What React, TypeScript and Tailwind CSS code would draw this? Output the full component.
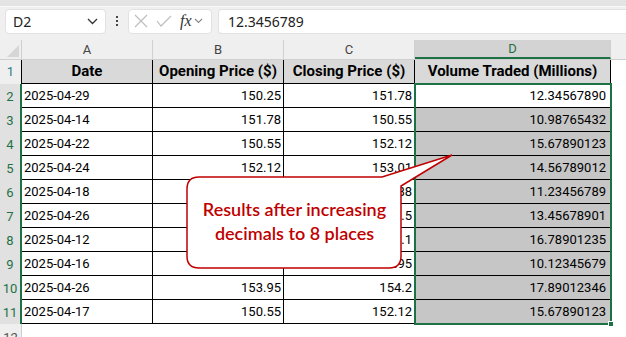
import React from 'react';

const rows = [
    ['2025-04-29', '150.25', '151.78', '12.34567890'],
    ['2025-04-14', '151.78', '150.55', '10.98765432'],
    ['2025-04-22', '150.55', '152.12', '15.67890123'],
    ['2025-04-24', '152.12', '153.01', '14.56789012'],
    ['2025-04-18', '153.01', '152.88', '11.23456789'],
    ['2025-04-26', '152.88', '151.5', '13.45678901'],
    ['2025-04-12', '151.5', '154.1', '16.78901235'],
    ['2025-04-16', '154.1', '153.95', '10.12345679'],
    ['2025-04-26', '153.95', '154.2', '17.89012346'],
    ['2025-04-17', '150.55', '152.12', '15.67890123'],
];

const ColHead = ({ label, w, active }: any) => (
    <div
        className={`h-full flex items-center justify-center border-r border-[#d0d0d0] text-[13px] ${
            active ? 'bg-[#d3d3d3] text-[#1e7145] border-b-2 border-b-[#1e7145]' : 'text-[#444]'
        } ${w}`}
    >
        {label}
    </div>
);

export default function App() {
    return (
        <div className="relative w-[626px] h-[337px] overflow-hidden bg-white" style={{ fontFamily: 'Roboto, sans-serif' }}>
            {/* Formula bar */}
            <div className="h-[40px] bg-[#f0f0f0]">
                <div className="h-[7px] bg-[#e4e4e4] border-b border-[#f8f8f8]" />
                <div className="flex items-center h-[26px] mt-[1px] pl-[5px]" style={{ fontFamily: '"Noto Sans", sans-serif' }}>
                    <div className="w-[101px] h-[25px] bg-white rounded-[4px] border border-[#e2e2e2] flex items-center justify-between pl-[7px] pr-[7px] text-[14px] text-[#222]">
                        <span>D2</span>
                        <svg width="11" height="7" viewBox="0 0 11 7" fill="none" stroke="#333" strokeWidth="1.3">
                            <path d="M1 1l4.5 4.5L10 1" />
                        </svg>
                    </div>
                    <div className="w-[22px] flex flex-col items-center gap-[2px]">
                        <span className="w-[2px] h-[2px] bg-[#444]" />
                        <span className="w-[2px] h-[2px] bg-[#444]" />
                        <span className="w-[2px] h-[2px] bg-[#444]" />
                    </div>
                    <div className="w-[84px] h-[25px] bg-white rounded-[4px] border border-[#e2e2e2] flex items-center pl-[5px] gap-[8px]">
                        <svg width="14" height="14" viewBox="0 0 14 14" stroke="#bdbdbd" strokeWidth="1.2">
                            <path d="M1 1l12 12M13 1L1 13" />
                        </svg>
                        <svg width="16" height="12" viewBox="0 0 16 12" fill="none" stroke="#bdbdbd" strokeWidth="1.2">
                            <path d="M1 6l4 5L15 1" />
                        </svg>
                        <span className="flex items-center gap-[2px]">
                            <span className="italic text-[16px] text-[#333] leading-none" style={{ fontFamily: '"Liberation Serif", serif' }}>
                                fx
                            </span>
                            <svg width="9" height="6" viewBox="0 0 9 6" fill="none" stroke="#888" strokeWidth="1.1">
                                <path d="M1 1l3.5 3.5L8 1" />
                            </svg>
                        </span>
                    </div>
                    <div className="ml-[6px] flex-1 h-[25px] bg-white rounded-l-[4px] border border-r-0 border-[#e2e2e2] flex items-center pl-[9px] text-[14px] text-[#222]">
                        12.3456789
                    </div>
                </div>
            </div>

            {/* Column headers */}
            <div className="flex h-[20px] bg-[#efefef] border-b border-[#cfcfcf]">
                <div className="w-[22px] h-full border-r border-[#cfcfcf] flex items-end justify-end p-[2px]">
                    <svg width="12" height="12" viewBox="0 0 12 12">
                        <path d="M12 0V12H0Z" fill="#d6d6d6" />
                    </svg>
                </div>
                <ColHead label="A" w="w-[131px]" />
                <ColHead label="B" w="w-[131px]" />
                <ColHead label="C" w="w-[131px]" />
                <ColHead label="D" w="w-[196px]" active />
                <div className="flex-1 h-full" />
            </div>

            {/* Header row */}
            <div className="flex h-[24px]">
                <div className="w-[22px] bg-[#efefef] border-r border-black flex items-center justify-center text-[13px] text-[#2a7a8c]">1</div>
                {['Date', 'Opening Price ($)', 'Closing Price ($)', 'Volume Traded (Millions)'].map((h, i) => (
                    <div
                        key={h}
                        className={`${i === 3 ? 'w-[196px]' : 'w-[131px]'} bg-[#d9d9d9] border-r border-b border-black flex items-center justify-center font-bold text-[15px] text-black`}
                    >
                        {h}
                    </div>
                ))}
            </div>

            {/* Data rows */}
            {rows.map((r, i) => (
                <div key={i} className="flex h-[24px]">
                    <div className="w-[22px] bg-[#e1e1e1] border-r-2 border-[#1e7145] flex items-center justify-center text-[13px] text-[#1e7145] pt-[2px]">
                        {i + 2}
                    </div>
                    <div className="w-[131px] border-r border-b border-black flex items-center pl-[2px] text-[13px] text-black">{r[0]}</div>
                    <div className="w-[131px] border-r border-b border-black flex items-center justify-end pr-[2px] text-[13px] text-black">{r[1]}</div>
                    <div className="w-[131px] border-r border-b border-black flex items-center justify-end pr-[2px] text-[13px] text-black">{r[2]}</div>
                    <div className={`w-[196px] border-r border-b border-black flex items-center justify-end pr-[4px] text-[13px] text-black ${i === 0 ? 'bg-white' : 'bg-[#c6c6c6]'}`}>
                        {r[3]}
                    </div>
                </div>
            ))}

            <div className="flex h-[24px]">
                <div className="w-[22px] bg-[#efefef] border-r border-[#cfcfcf] flex items-center justify-center text-[13px] text-[#555] pt-[4px]">12</div>
            </div>

            {/* Selection border D2:D11 */}
            <div className="absolute left-[414px] top-[83px] w-[198px] h-[242px] border-2 border-[#1e7145] pointer-events-none" />
            <div className="absolute left-[608px] top-[321px] w-[6px] h-[6px] bg-[#1e7145] border border-white" />

            {/* Callout */}
            <svg className="absolute left-0 top-0 pointer-events-none" width="626" height="337">
                <path
                    d="M199 177 H382 L452 155 L401 186 V256 Q401 268 389 268 H199 Q187 268 187 256 V189 Q187 177 199 177 Z"
                    fill="white"
                    stroke="#c00000"
                    strokeWidth="1.5"
                />
            </svg>
            <div
                className="absolute left-[187px] top-[177px] w-[215px] h-[91px] flex flex-col items-center justify-center text-[#c00000] text-[18px] font-semibold leading-[24px] pb-[4px]"
                style={{ fontFamily: 'Lato, sans-serif' }}
            >
                <span>Results after increasing</span>
                <span>decimals to 8 places</span>
            </div>
        </div>
    );
}
